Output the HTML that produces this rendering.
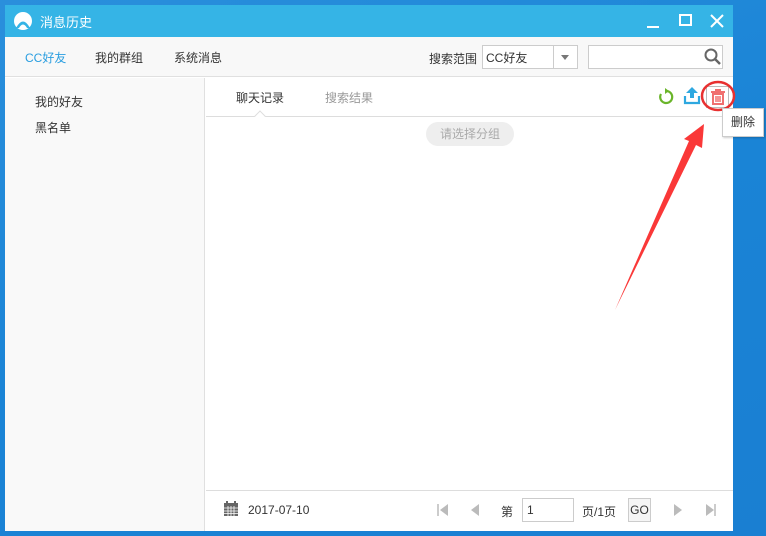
<!DOCTYPE html>
<html><head><meta charset="utf-8"><style>
*{margin:0;padding:0;box-sizing:border-box}
body{width:766px;height:536px;overflow:hidden;position:relative;background:linear-gradient(160deg,#2a8fdc 0%,#1a84d6 50%,#1a7fd2 100%);font-family:"Liberation Sans","Noto Sans CJK SC",sans-serif;font-size:12px;color:#333}
.abs{position:absolute}
.win{left:5px;top:5px;width:728px;height:526px;background:#fff}
</style></head><body>
<div class="abs win"></div>
<div class="abs" style="left:5px;top:5px;width:728px;height:32px;background:#35b4e6"></div>
<svg class="abs" style="left:13px;top:11px" width="20" height="20" viewBox="0 0 20 20"><circle cx="10" cy="10" r="9" fill="#fff"/><path d="M3 17 Q10 4 17 17 L14 17 Q10 10 6 17Z" fill="#35b4e6"/></svg>
<div class="abs" style="left:40px;top:12px;color:#fff;font-size:13px">消息历史</div>
<div class="abs" style="left:647px;top:26px;width:12px;height:2px;background:#fff"></div>
<div class="abs" style="left:679px;top:14px;width:13px;height:12px;border:2px solid #fff"></div>
<svg class="abs" style="left:710px;top:14px" width="14" height="14"><path d="M1 1L13 13M13 1L1 13" stroke="#fff" stroke-width="2"/></svg>
<div class="abs" style="left:5px;top:37px;width:728px;height:40px;background:#f8f8f8;border-bottom:1px solid #e0e0e0"></div>
<div class="abs" style="left:25px;top:49px;color:#2a9ee0">CC好友</div>
<div class="abs" style="left:95px;top:49px">我的群组</div>
<div class="abs" style="left:174px;top:49px">系统消息</div>
<div class="abs" style="left:429px;top:50px">搜索范围</div>
<div class="abs" style="left:482px;top:45px;width:96px;height:24px;border:1px solid #ccc;background:#fff"></div>
<div class="abs" style="left:486px;top:49px">CC好友</div>
<div class="abs" style="left:553px;top:45px;width:1px;height:24px;background:#ccc"></div>
<div class="abs" style="left:561px;top:55px;border:4px solid transparent;border-top:5px solid #777"></div>
<div class="abs" style="left:588px;top:45px;width:135px;height:24px;border:1px solid #ccc;background:#fff"></div>
<svg class="abs" style="left:704px;top:48px" width="18" height="18"><circle cx="7" cy="7" r="5.5" stroke="#666" stroke-width="2" fill="none"/><path d="M11 11L16 16" stroke="#666" stroke-width="2.5"/></svg>
<div class="abs" style="left:5px;top:78px;width:200px;height:453px;background:#f9f9f9;border-right:1px solid #e0e0e0"></div>
<div class="abs" style="left:35px;top:93px">我的好友</div>
<div class="abs" style="left:35px;top:119px">黑名单</div>
<div class="abs" style="left:206px;top:116px;width:527px;height:1px;background:#ddd"></div>
<div class="abs" style="left:256px;top:112px;width:8px;height:8px;background:#fff;border-left:1px solid #ddd;border-top:1px solid #ddd;transform:rotate(45deg)"></div>
<div class="abs" style="left:236px;top:89px">聊天记录</div>
<div class="abs" style="left:325px;top:89px;color:#999">搜索结果</div>
<div class="abs" style="left:426px;top:122px;width:88px;height:24px;border-radius:12px;background:#eee;color:#aaa;text-align:center;line-height:24px">请选择分组</div>
<svg class="abs" style="left:657px;top:88px" width="18" height="18"><path d="M4 6A6 6 0 1 0 9 3" stroke="#6ab52a" stroke-width="2.2" fill="none"/><path d="M8 0L12 3L8 6Z" fill="#6ab52a"/></svg>
<svg class="abs" style="left:683px;top:86px" width="18" height="19"><path d="M9 1L15 7H11V12H7V7H3Z" fill="#2ea8e0"/><path d="M2 10V17H16V10" stroke="#2ea8e0" stroke-width="2.2" fill="none"/></svg>
<div class="abs" style="left:706px;top:86px;width:23px;height:22px;border:1px solid #bbb;background:#fff"></div>
<svg class="abs" style="left:709px;top:88px" width="18" height="18"><path d="M2 4H16M7 4V2H11V4" stroke="#f07070" stroke-width="2" fill="none"/><path d="M4 6H14V16H4Z" stroke="#f07070" stroke-width="2" fill="none"/><path d="M7 8V14M9 8V14M11 8V14" stroke="#f07070" stroke-width="1.5"/></svg>
<svg class="abs" style="left:0;top:0" width="766" height="536"><ellipse cx="718" cy="96" rx="16" ry="14" stroke="#e83030" stroke-width="2.5" fill="none"/><polygon points="704,124 702,148 696,145 615,310 689,141 684,139" fill="#fa3838"/></svg>
<div class="abs" style="left:722px;top:108px;width:42px;height:29px;background:#fff;border:1px solid #ccc;box-shadow:1px 1px 2px rgba(0,0,0,.2);line-height:27px;text-align:center">删除</div>
<div class="abs" style="left:206px;top:490px;width:527px;height:1px;background:#ddd"></div>
<svg class="abs" style="left:223px;top:501px" width="16" height="16"><rect x="1" y="2" width="14" height="13" fill="#666"/><rect x="3" y="0" width="2" height="3" fill="#666"/><rect x="11" y="0" width="2" height="3" fill="#666"/><path d="M1 7H15M1 10H15M1 12.5H15M5 5V15M8 5V15M11 5V15" stroke="#fff" stroke-width="0.8"/></svg>
<div class="abs" style="left:248px;top:503px">2017-07-10</div>
<svg class="abs" style="left:436px;top:503px" width="290" height="14"><path d="M2 1V13" stroke="#bbb" stroke-width="1.5"/><path d="M12 1L4 7L12 13Z" fill="#bbb"/><path d="M43 1L35 7L43 13Z" fill="#bbb"/><path d="M238 1L246 7L238 13Z" fill="#bbb"/><path d="M270 1L278 7L270 13Z" fill="#bbb"/><path d="M279 1V13" stroke="#bbb" stroke-width="1.5"/></svg>
<div class="abs" style="left:501px;top:503px">第</div>
<div class="abs" style="left:522px;top:498px;width:52px;height:24px;border:1px solid #ccc;background:#fff;padding-left:4px;line-height:22px">1</div>
<div class="abs" style="left:582px;top:503px">页/1页</div>
<div class="abs" style="left:628px;top:498px;width:23px;height:24px;border:1px solid #ccc;background:#f5f5f5;line-height:22px;text-align:center">GO</div>
</body></html>
